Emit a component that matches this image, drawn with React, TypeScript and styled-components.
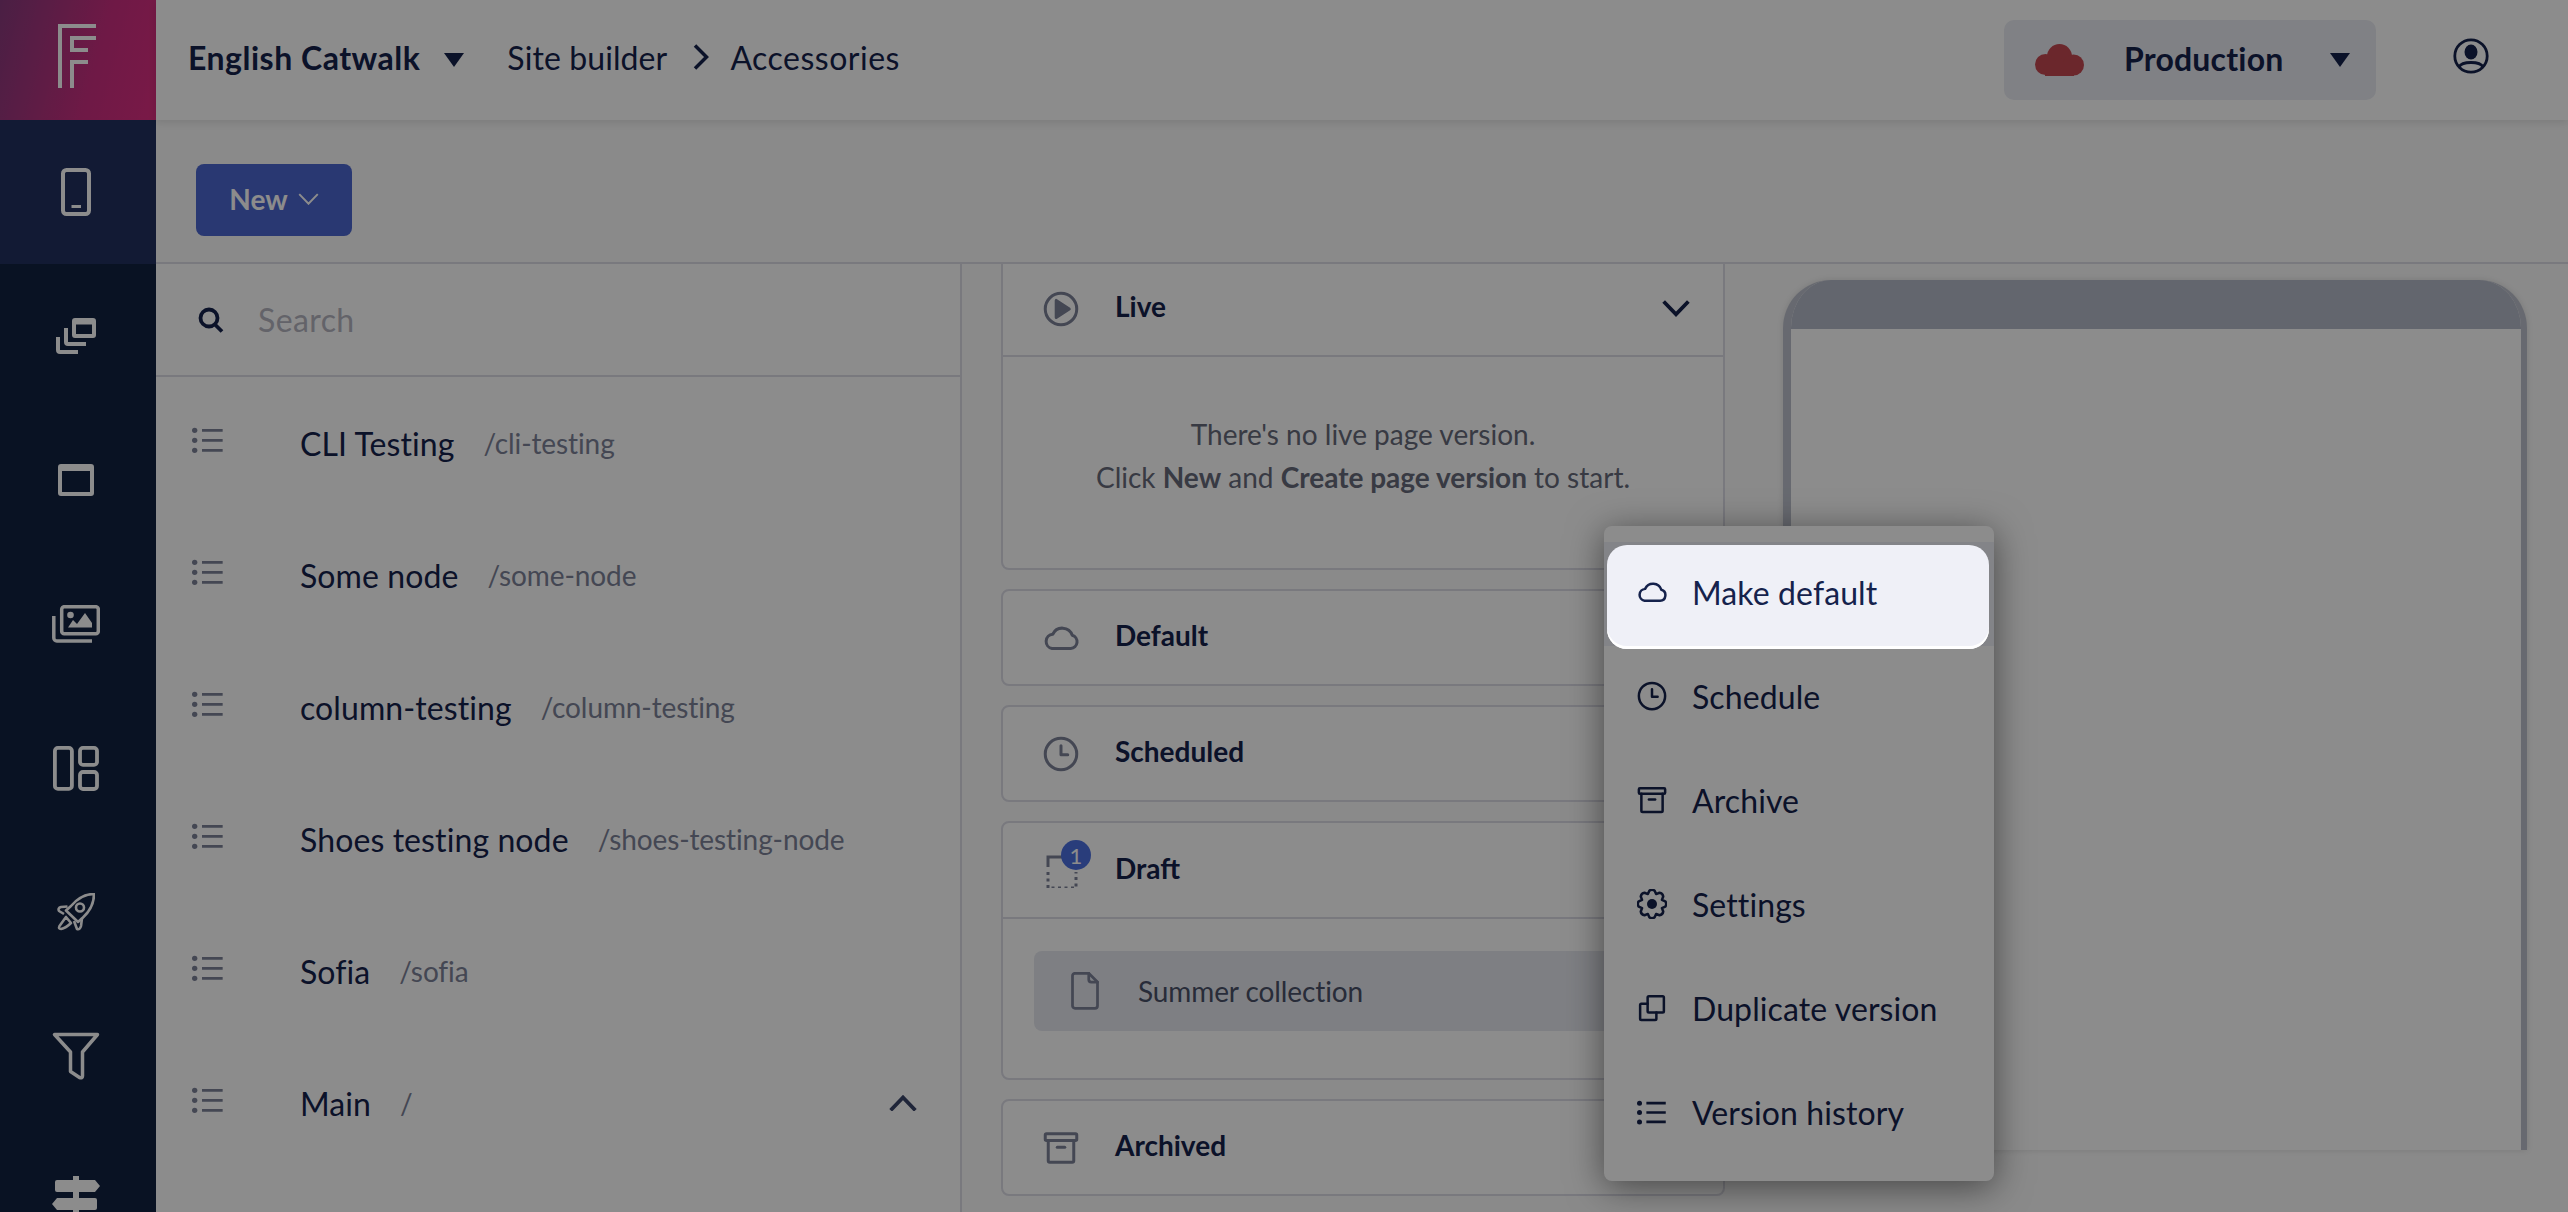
import React from "react";
import styled, { createGlobalStyle } from "styled-components";

const FONT = `"Lato", "Noto Sans", "Liberation Sans", sans-serif`;
const INK = "#15224c";
const MUTED = "#7c8298";
const LINE = "#dcdce6";

const Global = createGlobalStyle`
  html, body { margin: 0; padding: 0; width: 2568px; height: 1212px; overflow: hidden; background: #fbfbfb; }
  body { font-family: ${FONT}; color: ${INK}; }
  * { box-sizing: border-box; }
  svg { display: block; flex: none; }
`;

const Page = styled.div`
  display: flex;
  width: 2568px;
  height: 1212px;
  overflow: hidden;
`;

const Sidebar = styled.nav`
  flex: none;
  width: 156px;
  height: 1212px;
  overflow: hidden;
  background: #122141;
  color: #fff;
`;

const LogoCell = styled.div`
  height: 120px;
  padding: 24px 0 0 58px;
  background: linear-gradient(105deg, #873a7d 0%, #c92f80 60%, #de2f81 100%);
`;

const NavItem = styled.div<{ $active?: boolean }>`
  height: 144px;
  display: flex;
  align-items: center;
  justify-content: center;
  padding-right: 4px;
  background: ${(p) => (p.$active ? "#21315f" : "transparent")};
`;

const Main = styled.div`
  flex: 1;
  min-width: 0;
  display: flex;
  flex-direction: column;
`;

const Header = styled.header`
  position: relative;
  z-index: 2;
  flex: none;
  height: 120px;
  display: flex;
  align-items: center;
  padding-left: 32px;
  background: #fff;
  box-shadow: 0 3px 8px rgba(0, 0, 0, 0.1);
`;

const SiteName = styled.span`
  padding-bottom: 6px;
  font-size: 32px;
  font-weight: 700;
  letter-spacing: 0.5px;
`;

const Caret = styled.span<{ $ml: number }>`
  width: 0;
  height: 0;
  margin-left: ${(p) => p.$ml}px;
  border-left: 10px solid transparent;
  border-right: 10px solid transparent;
  border-top: 14px solid ${INK};
`;

const Crumb = styled.span<{ $ml: number; $spacing: number }>`
  margin-left: ${(p) => p.$ml}px;
  padding-bottom: 6px;
  font-size: 32px;
  letter-spacing: ${(p) => p.$spacing}px;
`;

const Crumbs = styled.div`
  flex: 1;
  display: flex;
  align-items: center;
  svg { margin: 0 0 6px 26px; }
`;

const EnvBox = styled.div`
  width: 372px;
  height: 80px;
  display: flex;
  align-items: center;
  padding-left: 31px;
  border-radius: 10px;
  background: #e9ebf2;
`;

const EnvName = styled.span`
  margin-left: 40px;
  width: 206px;
  padding-bottom: 3px;
  font-size: 32px;
  font-weight: 700;
  letter-spacing: 0.2px;
`;

const UserSlot = styled.div`
  width: 192px;
  display: flex;
  padding: 0 0 8px 77px;
`;

const Toolbar = styled.div`
  flex: none;
  height: 144px;
  padding: 44px 0 0 40px;
  border-bottom: 2px solid ${LINE};
  background: #fbfbfb;
`;

const NewButton = styled.button`
  width: 156px;
  height: 72px;
  display: flex;
  align-items: center;
  justify-content: center;
  gap: 10px;
  padding: 0 0 2px;
  border: 0;
  border-radius: 8px;
  background: #4b66cf;
  color: #fff;
  font-family: ${FONT};
  font-size: 28px;
  font-weight: 700;
`;

const Content = styled.div`
  flex: 1;
  min-height: 0;
  display: flex;
  background: #fbfbfb;
`;

const TreePanel = styled.section`
  flex: none;
  width: 806px;
  border-right: 2px solid ${LINE};
  background: #fff;
`;

const SearchRow = styled.div`
  height: 113px;
  display: flex;
  align-items: center;
  gap: 34px;
  padding: 0 0 0 42px;
  border-bottom: 2px solid ${LINE};
  color: ${INK};
`;

const Placeholder = styled.span`
  font-size: 32px;
  letter-spacing: 0.4px;
  color: #b4b4c0;
`;

const TreeRow = styled.div`
  height: 132px;
  display: flex;
  align-items: center;
  padding: 0 0 0 36px;
  color: ${MUTED};
  > svg:first-child { margin: -6px 76px 0 0; }
`;

const NodeName = styled.span`
  font-size: 32px;
  letter-spacing: 0.1px;
  color: ${INK};
`;

const NodeSlug = styled.span`
  margin-left: 29px;
  font-size: 28px;
  letter-spacing: -0.1px;
  color: ${MUTED};
`;

const RowEnd = styled.span`
  margin-left: auto;
  margin-right: 43px;
  color: #3a4468;
`;

const VersionColumn = styled.section`
  flex: none;
  width: 724px;
  margin-left: 39px;
  display: flex;
  flex-direction: column;
  gap: 19px;
`;

const Card = styled.div<{ $height: number }>`
  flex: none;
  height: ${(p) => p.$height}px;
  border: 2px solid ${LINE};
  border-radius: 8px;
  background: #fff;
  overflow: hidden;
`;

const TopCard = styled(Card)`
  border-top: 0;
  border-radius: 0 0 8px 8px;
`;

const CardHead = styled.div<{ $divider?: boolean; $height: number; $lift: number }>`
  height: ${(p) => p.$height}px;
  display: flex;
  align-items: center;
  padding: 0 33px ${(p) => p.$lift}px 40px;
  color: ${MUTED};
  border-bottom: ${(p) => (p.$divider ? `2px solid ${LINE}` : "0")};
`;

const CardTitle = styled.span`
  margin-left: 36px;
  padding-bottom: 5px;
  font-size: 28px;
  font-weight: 700;
  color: ${INK};
`;

const CardChevron = styled.span`
  margin-left: auto;
  color: ${INK};
`;

const EmptyNote = styled.p`
  margin: 0;
  padding-top: 56px;
  text-align: center;
  font-size: 28px;
  line-height: 43px;
  color: #666a7a;
  b { font-weight: 700; }
`;

const DraftIcon = styled.span`
  position: relative;
  display: block;
  flex: none;
  width: 36px;
  height: 36px;
`;

const DraftBadge = styled.span`
  position: absolute;
  top: -12px;
  left: 18px;
  width: 30px;
  height: 30px;
  display: flex;
  align-items: center;
  justify-content: center;
  border-radius: 50%;
  background: #4c70e0;
  color: #fff;
  font-size: 22px;
`;

const DraftBody = styled.div`
  padding: 32px 31px;
`;

const VersionRow = styled.div`
  height: 80px;
  display: flex;
  align-items: center;
  padding-left: 36px;
  border-radius: 8px;
  background: #e6e8ef;
  color: ${MUTED};
`;

const VersionName = styled.span`
  margin-left: 38px;
  font-size: 28px;
  letter-spacing: -0.1px;
  color: #4a5068;
`;

const PreviewArea = styled.section`
  flex: 1;
  min-width: 0;
  padding: 16px 0 0 58px;
`;

const PhoneFrame = styled.div`
  width: 744px;
  height: 870px;
  border-style: solid;
  border-color: #bcc0cc;
  border-width: 0 6px 0 8px;
  border-radius: 48px 48px 0 0;
  background: #fff;
  box-shadow: 0 0 6px rgba(0, 0, 0, 0.12);
  overflow: hidden;
`;

const PhoneBar = styled.div`
  height: 49px;
  margin: 0 -6px 0 -8px;
  background: #b5bac8;
`;

const Menu = styled.div`
  position: absolute;
  left: 1604px;
  top: 526px;
  width: 390px;
  padding: 16px 0 15px;
  border-radius: 8px;
  background: #fff;
  box-shadow: 0 6px 36px rgba(0, 0, 0, 0.5);
`;

const MenuRow = styled.div<{ $hot?: boolean }>`
  position: relative;
  height: 104px;
  background: ${(p) => (p.$hot ? "#eff0f7" : "transparent")};
`;

const MenuRowInner = styled.div<{ $hot?: boolean }>`
  position: relative;
  z-index: ${(p) => (p.$hot ? 30 : "auto")};
  height: 100px;
  display: flex;
  align-items: center;
  gap: 25px;
  padding-left: 33px;
  color: ${INK};
`;

const MenuLabel = styled.span`
  font-size: 32px;
  letter-spacing: 0.1px;
`;

const Spotlight = styled.div`
  position: absolute;
  z-index: 20;
  top: 3px;
  left: 3px;
  right: 5px;
  bottom: -3px;
  border-radius: 20px;
  background: #eff0f7;
  box-shadow: inset 0 -3px 0 #fff;
`;

const Backdrop = styled.div`
  position: fixed;
  inset: 0;
  z-index: 10;
  background: rgba(0, 0, 0, 0.45);
`;

type IconProps = { size?: number };

const Logo = () => (
  <svg width="38" height="64" viewBox="0 0 38 64" fill="#fff">
    <rect x="0" y="0" width="38" height="4" />
    <rect x="0" y="0" width="4" height="64" />
    <rect x="12" y="12" width="26" height="4" />
    <rect x="12" y="12" width="4" height="16" />
    <rect x="12" y="24" width="18" height="4" />
    <rect x="12" y="36" width="18" height="4" />
    <rect x="12" y="36" width="4" height="28" />
  </svg>
);

const PhoneIcon = () => (
  <svg width="30" height="48" viewBox="0 0 30 48" fill="none">
    <rect x="2" y="2" width="26" height="44" rx="3.5" stroke="currentColor" strokeWidth="4" />
    <rect x="10.5" y="37" width="9.5" height="3" fill="currentColor" />
  </svg>
);

const PagesIcon = () => (
  <svg width="40" height="36" viewBox="0 0 40 36" fill="none" stroke="currentColor" strokeWidth="4" strokeLinecap="butt">
    <path fill="currentColor" stroke="none" fillRule="evenodd" d="M19 0H37a3 3 0 0 1 3 3V17a3 3 0 0 1-3 3H19a3 3 0 0 1-3-3V3a3 3 0 0 1 3-3ZM20 6.500V16H36V6.500Z" />
    <path d="M10 10V24a2 2 0 0 0 2 2H30" />
    <path d="M2 19V32a2 2 0 0 0 2 2H22" />
  </svg>
);

const BrowserIcon = () => (
  <svg width="36" height="32" viewBox="0 0 36 32">
    <path fill="currentColor" fillRule="evenodd" d="M3 0H33a3 3 0 0 1 3 3V29a3 3 0 0 1-3 3H3a3 3 0 0 1-3-3V3a3 3 0 0 1 3-3ZM4 7V28H32V7Z" />
  </svg>
);

const ImagesIcon = () => (
  <svg width="48" height="38" viewBox="0 0 48 38" fill="none" stroke="currentColor" strokeWidth="3.500">
    <rect x="9.700" y="1.700" width="36.600" height="27" rx="2.500" />
    <path d="M1.800 11V33a3 3 0 0 0 3 3H40" />
    <circle cx="18.500" cy="10" r="3.300" fill="currentColor" stroke="none" />
    <path fill="currentColor" stroke="none" d="M16 22.500L21 15L25 19L33 8L40 18V22.500Z" />
  </svg>
);

const LayoutIcon = () => (
  <svg width="46" height="45" viewBox="0 0 46 45" fill="none" stroke="currentColor" strokeWidth="3.800">
    <rect x="1.900" y="1.900" width="17" height="41" rx="3" />
    <rect x="27" y="1.900" width="17" height="17" rx="3" />
    <rect x="27" y="26" width="17" height="17" rx="3" />
  </svg>
);

const RocketIcon = () => (
  <svg width="38" height="38" viewBox="0 0 38 38" fill="none" stroke="currentColor" strokeWidth="2.600" strokeLinejoin="round">
    <path d="M37 1C37 10 33 18 26 24.500L21 29L9 17.500L14 13C20 6 28 1 37 1Z" />
    <path d="M10.500 13.500L4 14Q0.500 15 2 18L7 21" />
    <path d="M25 25L24 33Q23 37 20 36L17 28" />
    <path d="M9 24L2.500 33Q1 36 4 36Q9 35 14 30Z" />
    <circle cx="23" cy="14.500" r="4" />
  </svg>
);

const FunnelIcon = () => (
  <svg width="48" height="48" viewBox="0 0 48 48" fill="none" stroke="currentColor" strokeWidth="3.500" strokeLinejoin="round">
    <path d="M2.500 2.500H45.500L30.500 20V44Q30.500 46.500 27.500 45.500L18.500 39.500V20Z" />
  </svg>
);

const SignIcon = () => (
  <svg width="48" height="48" viewBox="0 0 48 48" fill="currentColor">
    <path d="M21 0h6v4H43l5 6-5 6H27v5H21v-5H5a2 2 0 0 1-2-2V6a2 2 0 0 1 2-2H21Z" />
    <path d="M21 21h6v1H43a2 2 0 0 1 2 2v8a2 2 0 0 1-2 2H27v14H21V34H5l-5-6 5-6H21Z" />
  </svg>
);

const Stroke = ({ size = 36, w = 24, h = 24, sw = 2, children }: IconProps & { w?: number; h?: number; sw?: number; children: React.ReactNode }) => (
  <svg width={size} height={(size * h) / w} viewBox={`0 0 ${w} ${h}`} fill="none" stroke="currentColor" strokeWidth={sw} strokeLinecap="round" strokeLinejoin="round">
    {children}
  </svg>
);

const CloudIcon = ({ size }: IconProps) => (
  <Stroke size={size} h={16}>
    <path d="M6 15H18.500A4.500 4.500 0 0 0 19.500 6.200A7 7 0 0 0 6.500 5.500A4.800 4.800 0 0 0 6 15Z" />
  </Stroke>
);

const ClockIcon = ({ size }: IconProps) => (
  <Stroke size={size}>
    <circle cx="12" cy="12" r="10.500" />
    <path d="M12 6.500V12.500H16.500" />
  </Stroke>
);

const ArchiveIcon = ({ size }: IconProps) => (
  <Stroke size={size}>
    <rect x="1.500" y="2.500" width="21" height="4.500" rx="0.800" />
    <path d="M3.500 7V20.500a1 1 0 0 0 1 1H19.500a1 1 0 0 0 1-1V7" />
    <path d="M9.500 11.500H14.500" />
  </Stroke>
);

const gearPath = (() => {
  const pts: string[] = [];
  for (let i = 0; i < 8; i++) {
    const a = (i * Math.PI) / 4 - Math.PI / 2;
    const d = Math.PI / 8;
    const p = (r: number, t: number) => `${(12 + r * Math.cos(t)).toFixed(2)} ${(12 + r * Math.sin(t)).toFixed(2)}`;
    pts.push(`${i === 0 ? "M" : "L"}${p(10.800, a - d / 2)}`, `Q${p(12.200, a)} ${p(10.800, a + d / 2)}`, `L${p(8.600, a + d)}`);
  }
  return pts.join(" ") + "Z";
})();

const GearIcon = ({ size }: IconProps) => (
  <Stroke size={size}>
    <path d={gearPath} />
    <circle cx="12" cy="12" r="4" fill="currentColor" stroke="none" />
  </Stroke>
);

const DuplicateIcon = ({ size }: IconProps) => (
  <Stroke size={size}>
    <rect x="8.500" y="2.500" width="13" height="13" rx="1" />
    <path d="M8.500 8.500H3.500a1 1 0 0 0-1 1V20.500a1 1 0 0 0 1 1H14.500a1 1 0 0 0 1-1V15.500" />
  </Stroke>
);

const ListIcon = ({ size }: IconProps) => (
  <Stroke size={size} h={20} sw={2.100}>
    <path d="M7.500 2.500H23M7.500 10H23M7.500 17.500H23" strokeLinecap="butt" />
    <circle cx="2" cy="2.500" r="2" fill="currentColor" stroke="none" />
    <circle cx="2" cy="10" r="2" fill="currentColor" stroke="none" />
    <circle cx="2" cy="17.500" r="2" fill="currentColor" stroke="none" />
  </Stroke>
);

const PlayIcon = () => (
  <Stroke size={36} sw={2}>
    <circle cx="12" cy="12" r="10.500" />
    <path d="M8.800 6.300V17.700L17.500 12Z" fill="currentColor" />
  </Stroke>
);

const DashedSquare = () => (
  <svg width="36" height="36" viewBox="0 0 36 36" fill="none" stroke="currentColor" strokeWidth="3">
    <path d="M5 15V5H24" />
    <path d="M5 20V36H33V20" strokeDasharray="3 3.500" />
  </svg>
);

const FileIcon = () => (
  <Stroke size={30} w={24} h={30} sw={2.200}>
    <path d="M2 3a2 2 0 0 1 2-2H15L22 8V27a2 2 0 0 1-2 2H4a2 2 0 0 1-2-2Z" />
    <path d="M15 1V6a2 2 0 0 0 2 2H22" />
  </Stroke>
);

const Chevron = ({ up, size = 28, sw = 3.800 }: { up?: boolean; size?: number; sw?: number }) => (
  <svg width={size} height={size * 0.6} viewBox="0 0 28 17" fill="none" stroke="currentColor" strokeWidth={sw}>
    <path d={up ? "M1.500 15.500L14 2.500L26.500 15.500" : "M1.500 1.500L14 14.500L26.500 1.500"} />
  </svg>
);

const CrumbArrow = () => (
  <svg width="16" height="26" viewBox="0 0 16 26" fill="none" stroke={INK} strokeWidth="3.500">
    <path d="M2 1.500L13.500 13L2 24.500" />
  </svg>
);

const RedCloud = () => (
  <svg width="49" height="32" viewBox="0 0 49 32" fill="#c34850">
    <circle cx="24.500" cy="12.500" r="12.500" />
    <circle cx="10.500" cy="20.500" r="10.500" />
    <circle cx="38.500" cy="21" r="10.500" />
    <rect x="10" y="18" width="29" height="14" />
  </svg>
);

const UserIcon = () => (
  <svg width="36" height="36" viewBox="0 0 36 36" fill="none" stroke={INK} strokeWidth="2.800">
    <circle cx="18" cy="18" r="16.200" />
    <ellipse cx="18" cy="14" rx="6.500" ry="7.500" fill={INK} stroke="none" />
    <path d="M6 29C9 23 27 23 30 29" />
  </svg>
);

const SearchIcon = () => (
  <svg width="26" height="26" viewBox="0 0 26 26" fill="none" stroke={INK} strokeWidth="3.800">
    <circle cx="11" cy="11" r="8.500" />
    <path d="M17 17.500L24 24.500" />
  </svg>
);

const NAV = [PagesIcon, BrowserIcon, ImagesIcon, LayoutIcon, RocketIcon, FunnelIcon, SignIcon];

const NODES: { name: string; slug: string; open?: boolean }[] = [
  { name: "CLI Testing", slug: "/cli-testing" },
  { name: "Some node", slug: "/some-node" },
  { name: "column-testing", slug: "/column-testing" },
  { name: "Shoes testing node", slug: "/shoes-testing-node" },
  { name: "Sofia", slug: "/sofia" },
  { name: "Main", slug: "/", open: true },
];

const MENU = [
  { label: "Make default", Icon: CloudIcon },
  { label: "Schedule", Icon: ClockIcon },
  { label: "Archive", Icon: ArchiveIcon },
  { label: "Settings", Icon: GearIcon },
  { label: "Duplicate version", Icon: DuplicateIcon },
  { label: "Version history", Icon: ListIcon },
];

export default function App() {
  return (
    <Page>
      <Global />
      <Sidebar>
        <LogoCell>
          <Logo />
        </LogoCell>
        <NavItem $active>
          <PhoneIcon />
        </NavItem>
        {NAV.map((Icon, i) => (
          <NavItem key={i}>
            <Icon />
          </NavItem>
        ))}
      </Sidebar>

      <Main>
        <Header>
          <Crumbs>
            <SiteName>English Catwalk</SiteName>
            <Caret $ml={24} />
            <Crumb $ml={43} $spacing={0.1}>Site builder</Crumb>
            <CrumbArrow />
            <Crumb $ml={21} $spacing={0.5}>Accessories</Crumb>
          </Crumbs>
          <EnvBox>
            <RedCloud />
            <EnvName>Production</EnvName>
            <Caret $ml={0} />
          </EnvBox>
          <UserSlot>
            <UserIcon />
          </UserSlot>
        </Header>

        <Toolbar>
          <NewButton>
            New
            <Chevron size={21} sw={2.600} />
          </NewButton>
        </Toolbar>

        <Content>
          <TreePanel>
            <SearchRow>
              <SearchIcon />
              <Placeholder>Search</Placeholder>
            </SearchRow>
            {NODES.map((n) => (
              <TreeRow key={n.name}>
                <ListIcon size={32} />
                <NodeName>{n.name}</NodeName>
                <NodeSlug>{n.slug}</NodeSlug>
                {n.open && (
                  <RowEnd>
                    <Chevron up />
                  </RowEnd>
                )}
              </TreeRow>
            ))}
          </TreePanel>

          <VersionColumn>
            <TopCard $height={306}>
              <CardHead $divider $height={93} $lift={2}>
                <PlayIcon />
                <CardTitle>Live</CardTitle>
                <CardChevron>
                  <Chevron />
                </CardChevron>
              </CardHead>
              <EmptyNote>
                There's no live page version.
                <br />
                Click <b>New</b> and <b>Create page version</b> to start.
              </EmptyNote>
            </TopCard>
            <Card $height={97}>
              <CardHead $height={93} $lift={0}>
                <CloudIcon size={36} />
                <CardTitle>Default</CardTitle>
              </CardHead>
            </Card>
            <Card $height={97}>
              <CardHead $height={93} $lift={0}>
                <ClockIcon size={36} />
                <CardTitle>Scheduled</CardTitle>
              </CardHead>
            </Card>
            <Card $height={259}>
              <CardHead $divider $height={96} $lift={0}>
                <DraftIcon>
                  <DashedSquare />
                  <DraftBadge>1</DraftBadge>
                </DraftIcon>
                <CardTitle>Draft</CardTitle>
              </CardHead>
              <DraftBody>
                <VersionRow>
                  <FileIcon />
                  <VersionName>Summer collection</VersionName>
                </VersionRow>
              </DraftBody>
            </Card>
            <Card $height={97}>
              <CardHead $height={93} $lift={0}>
                <ArchiveIcon size={36} />
                <CardTitle>Archived</CardTitle>
              </CardHead>
            </Card>
          </VersionColumn>

          <PreviewArea>
            <PhoneFrame>
              <PhoneBar />
            </PhoneFrame>
          </PreviewArea>
        </Content>
      </Main>

      <Menu>
        {MENU.map(({ label, Icon }, i) => (
          <MenuRow key={label} $hot={i === 0}>
            {i === 0 && <Spotlight />}
            <MenuRowInner $hot={i === 0}>
              <Icon size={30} />
              <MenuLabel>{label}</MenuLabel>
            </MenuRowInner>
          </MenuRow>
        ))}
      </Menu>

      <Backdrop />
    </Page>
  );
}
